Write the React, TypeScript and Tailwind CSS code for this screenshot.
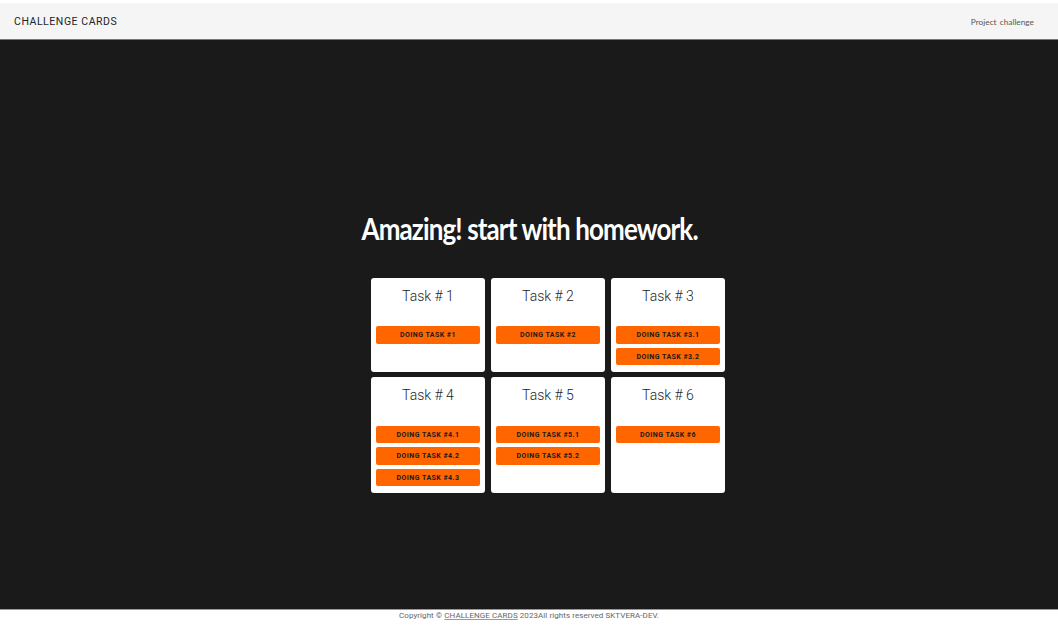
const tasks = [
  { title: "Task # 1", actions: ["DOING TASK #1"] },
  { title: "Task # 2", actions: ["DOING TASK #2"] },
  { title: "Task # 3", actions: ["DOING TASK #3.1", "DOING TASK #3.2"] },
  { title: "Task # 4", actions: ["DOING TASK #4.1", "DOING TASK #4.2", "DOING TASK #4.3"] },
  { title: "Task # 5", actions: ["DOING TASK #5.1", "DOING TASK #5.2"] },
  { title: "Task # 6", actions: ["DOING TASK #6"] },
];

const TaskCard = ({ title, actions }: { title: string; actions: string[] }) => (
  <div className="rounded-[3px] bg-white px-[5px] pt-[9px] pb-[6.5px]">
    <h2 className="text-center font-['Roboto',sans-serif] text-[14px] leading-[18px] font-light text-[#212529]">
      {title}
    </h2>
    <div className="mt-[21.4px] flex flex-col gap-[4px]">
      {actions.map((action) => (
        <button
          key={action}
          type="button"
          className="h-[17.5px] rounded-[2px] bg-[#ff6600] pt-[2px] text-center font-['Roboto',sans-serif] text-[7px] leading-[15.5px] font-bold tracking-[0.45px] text-[#1a1a1a]"
        >
          {action}
        </button>
      ))}
    </div>
  </div>
);

const App = () => {
  return (
    <div className="flex h-[637px] w-[1058px] flex-col overflow-hidden bg-white font-['Roboto',sans-serif]">
      <header className="mt-[3px] flex h-[37px] shrink-0 items-center justify-between border-b border-[#777777] bg-[#f5f5f5] pt-[2px] pr-[24px] pl-[14px]">
        <span className="text-[10.5px] tracking-[0.55px] text-[#212529]">CHALLENGE CARDS</span>
        <span className="font-['Lato',sans-serif] text-[8.3px] font-normal text-[#555555] [word-spacing:1px]">Project challenge</span>
      </header>
      <main className="flex flex-1 flex-col items-center bg-[#1a1a1a] pt-[170px]">
        <h1 className="origin-center translate-x-[0.5px] scale-x-[0.866] font-['Lato',sans-serif] text-[30px] leading-[36px] font-bold tracking-[-1px] whitespace-nowrap text-white">
          Amazing! start with homework.
        </h1>
        <div className="mt-[32px] ml-[38px] grid w-[354px] grid-cols-3 gap-x-[6px] gap-y-[5.3px]">
          {tasks.map((task) => (
            <TaskCard key={task.title} title={task.title} actions={task.actions} />
          ))}
        </div>
      </main>
      <footer className="h-[28px] shrink-0 border-t border-[#999999] bg-white text-center text-[8px] leading-[11px] tracking-[0.07px] text-[#666666]">
        Copyright © <span className="underline decoration-[#999999]">CHALLENGE CARDS</span> 2023All rights reserved SKTVERA-DEV.
      </footer>
    </div>
  );
};

export default App;
